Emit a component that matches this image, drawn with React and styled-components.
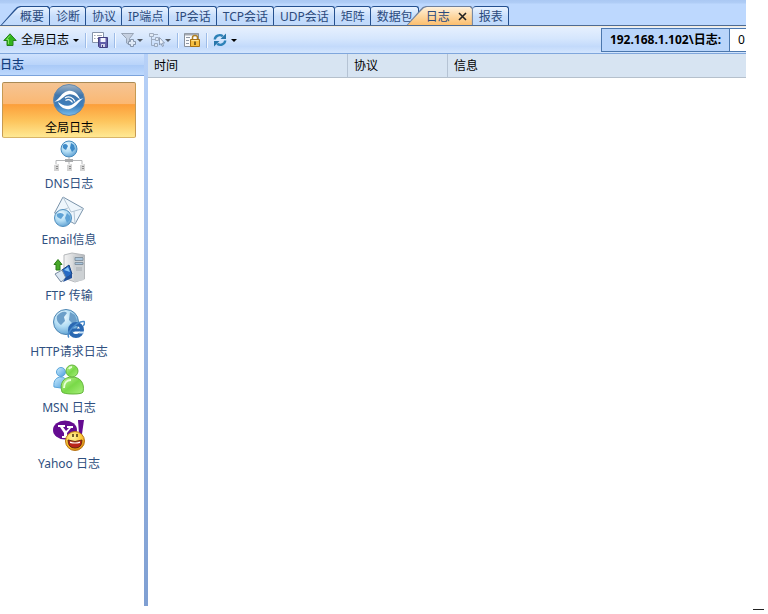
import { useState } from "react";
import styled, { createGlobalStyle, css } from "styled-components";

const GlobalStyle = createGlobalStyle`
  * {
    box-sizing: border-box;
  }
  body {
    margin: 0;
    background-color: #fff;
    font-family: "Noto Sans", "Noto Sans CJK SC", sans-serif;
    font-size: 12px;
    line-height: 18px;
    color: #000;
  }
  button {
    margin: 0;
    padding: 0;
    border: none;
    background: none;
    font: inherit;
    color: inherit;
    cursor: pointer;
  }
`;

const Page = styled.div`
  display: flex;
  align-items: stretch;
  min-height: 100vh;
`;

const Wrapper = styled.div`
  flex: 1;
  min-width: 0;
  display: flex;
  flex-direction: column;
  margin-bottom: 8px;
`;

const Gutter = styled.aside`
  width: 22px;
  display: flex;
  flex-direction: column;
  justify-content: flex-end;
  padding: 4px;
`;

const Dash = styled.div`
  width: 11px;
  height: 1px;
  margin-left: 3px;
  background-color: #222;
`;

const TabStrip = styled.div`
  display: flex;
  height: 26px;
  padding-top: 6px;
  overflow: hidden;
  border-bottom: 1px solid #4d6b94;
  background: linear-gradient(#aac8f3 0, #b0cdf6 3px, #bdd8fe 4px);
`;

const slanted = css`
  border-color: transparent;
  padding-left: 20px;
  isolation: isolate;
  background: none;

  &::before,
  &::after {
    content: "";
    position: absolute;
    z-index: -1;
    clip-path: polygon(
      0 100%, 14px 4px, 17px 1px, 20px 0,
      calc(100% - 2px) 0, 100% 2px, 100% 100%
    );
  }
  &::before {
    inset: -1px -1px 0 0;
    background-color: ${(props) => (props.$active ? "#6d7f9c" : "#24508f")};
  }
  &::after {
    inset: 0 0 0 1px;
    background: ${(props) =>
      props.$active
        ? "linear-gradient(#fff1dc, #fdd9a6 45%, #fdbc68)"
        : "linear-gradient(#eaf3ff, #c6ddfb 50%, #bfd9fc)"};
  }
`;

const TabItem = styled.div`
  position: relative;
  flex: none;
  display: flex;
  align-items: center;
  height: 20px;
  padding: 0 5px 0 6px;
  border: 1px solid #24508f;
  border-width: 1px 1px 0 0;
  border-radius: 3px 3px 0 0;
  color: #2b4a7c;
  background: linear-gradient(#eaf3ff, #c6ddfb 50%, #bfd9fc);
  ${(props) => props.$slanted && slanted}
  ${(props) =>
    props.$active &&
    css`
      margin-left: -13px;
    `}
`;

const CloseButton = styled.button`
  display: flex;
  margin-left: 8px;
`;

const Toolbar = styled.div`
  display: flex;
  align-items: center;
  height: 28px;
  padding-left: 3px;
  border-top: 1px solid #f4ead8;
  border-bottom: 1px solid #7fa6dc;
  background: linear-gradient(#e6f0fe, #d5e6fd 45%, #c3dafb 75%, #d3e5fe);
`;

const ToolGroup = styled.div`
  display: flex;
  align-items: center;
  gap: 6px;
`;

const ToolButton = styled.button`
  display: flex;
  align-items: center;
  gap: ${(props) => (props.disabled ? "0" : "4px")};
  opacity: ${(props) => (props.disabled ? 0.6 : 1)};
`;

const Caret = styled.span`
  border: 3px solid transparent;
  border-top-color: #000;
  border-bottom: none;
`;

const Divider = styled.span`
  width: 2px;
  height: 15px;
  margin: 0 5px 0 6px;
  border-left: 1px solid #9dbce8;
  border-right: 1px solid #f3f8ff;
`;

const Status = styled.div`
  display: flex;
  align-self: stretch;
  margin: 1px 0 1px auto;
  border: 1px solid #4b77ad;
  border-right: none;
  line-height: 22px;
  background-color: #b9d5fb;
`;

const StatusPath = styled.strong`
  padding: 0 8px;
`;

const StatusCount = styled.output`
  width: 17px;
  padding-left: 8px;
  overflow: hidden;
  border-left: 1px solid #4b77ad;
  background-color: #fff;
`;

const Body = styled.div`
  flex: 1;
  display: flex;
`;

const Sidebar = styled.nav`
  width: 148px;
  border-right: 4px solid;
  border-image: linear-gradient(#b7d1f8, #7f9fd2) 1;
`;

const SidebarTitle = styled.h2`
  margin: 0;
  height: 22px;
  font-size: 12px;
  line-height: 22px;
  font-weight: 500;
  color: #15407f;
  border-bottom: 1px solid #7ba3dc;
  background: linear-gradient(#cfe2fd, #b9d4fa 50%, #a9c9f7 52%, #bdd8fd);
`;

const LogList = styled.div`
  display: flex;
  flex-direction: column;
  padding: 6px 8px 6px 2px;
`;

const LogButton = styled.button`
  display: flex;
  flex-direction: column;
  align-items: center;
  gap: 3px;
  height: 56px;
  padding-top: 1px;
  border: 1px solid transparent;
  border-radius: 2px;
  color: #2f5080;
  ${(props) =>
    props.$active &&
    css`
      color: #000;
      border-color: #a98a55 #c69a52 #d9b568;
      background: linear-gradient(#f5c493, #fbb873 38%, #fc9f3b 40%, #fdc45c 70%, #ffe993);
    `}
`;

const Content = styled.main`
  flex: 1;
  min-width: 0;
`;

const LogTable = styled.table`
  width: 100%;
  table-layout: fixed;
  border-collapse: separate;
  border-spacing: 0;
`;

const HeaderCell = styled.th`
  width: ${(props) => props.$width || "auto"};
  height: 24px;
  padding: 0 6px;
  font-weight: 400;
  text-align: left;
  border-bottom: 1px solid #b5c0cc;
  background-color: #d7e4f2;
  &:not(:last-child) {
    border-right: 1px solid #b5c3d4;
  }
`;

const Icon = ({ size = 16, children }) => (
  <svg width={size} height={size} viewBox={`0 0 ${size} ${size}`} fill="none" aria-hidden="true">
    {children}
  </svg>
);

const GradientDefs = styled.svg`
  position: absolute;
  width: 0;
  height: 0;
`;

const Gradients = () => (
  <GradientDefs aria-hidden="true">
    <defs>
      <radialGradient id="globe" cx="0.38" cy="0.3" r="0.75">
        <stop offset="0" stopColor="#f2fbff" />
        <stop offset="0.5" stopColor="#b3ddf4" />
        <stop offset="1" stopColor="#5c9fd2" />
      </radialGradient>
      <linearGradient id="ball" x1="0" y1="0" x2="0" y2="1">
        <stop offset="0" stopColor="#a3b5c6" />
        <stop offset="0.35" stopColor="#3f76ad" />
        <stop offset="0.7" stopColor="#3f80bd" />
        <stop offset="1" stopColor="#79bdec" />
      </linearGradient>
      <linearGradient id="green" x1="0" y1="0" x2="1" y2="1">
        <stop offset="0" stopColor="#c6f59d" />
        <stop offset="0.5" stopColor="#79d948" />
        <stop offset="1" stopColor="#a9f07c" />
      </linearGradient>
      <linearGradient id="blue" x1="0" y1="0" x2="1" y2="1">
        <stop offset="0" stopColor="#cdeeff" />
        <stop offset="1" stopColor="#4a9ddd" />
      </linearGradient>
      <linearGradient id="metal" x1="0" y1="0" x2="1" y2="0">
        <stop offset="0" stopColor="#f4f4f4" />
        <stop offset="1" stopColor="#b4b8bc" />
      </linearGradient>
      <radialGradient id="smile" cx="0.4" cy="0.3" r="0.7">
        <stop offset="0" stopColor="#fff6a0" />
        <stop offset="0.7" stopColor="#fbc22c" />
        <stop offset="1" stopColor="#d88712" />
      </radialGradient>
    </defs>
  </GradientDefs>
);

const UpIcon = () => (
  <Icon size={14}>
    <path d="M7 0.8 13.2 7.5H10V12.5H4V7.5H0.8Z" fill="#31b51c" stroke="#26801a" />
    <path d="M7 2.5 3.5 6.5H5.5V11" stroke="#86df64" />
  </Icon>
);

const SaveIcon = () => (
  <Icon>
    <path d="M0.5 0.5H11.5V10.5H0.5Z" fill="#fff" stroke="#8795aa" />
    <path d="M2 3.5H3.5M5 3.5H10M2 6.5H3.5M5 6.5H8" stroke="#a1a9b6" />
    <path d="M6.5 5.5H15.5V15.5H7.5L6.5 14.5Z" fill="#625faa" stroke="#434080" />
    <path d="M8.5 6H13.5V10H8.5Z" fill="#f3f4ff" />
    <path d="M9 12H13V15H9Z" fill="#d1d1e8" />
    <path d="M10 13H11V15H10Z" fill="#434080" />
  </Icon>
);

const FilterIcon = () => (
  <Icon>
    <path d="M0.5 1.5H12.5L8.5 6.5V13L5.5 11V6.5Z" fill="#b9c1ce" stroke="#6d7888" />
    <path d="M9.5 7.5H12.5V9.5H14.5V12.5H12.5V14.5H9.5V12.5H7.5V9.5H9.5Z" fill="#eef1f5" stroke="#596577" />
  </Icon>
);

const TreeIcon = () => (
  <Icon>
    <path d="M0.5 1.5H4.5V4.5H0.5ZM6.5 5.5H9.5V8.5H6.5ZM5.5 11.5H8.5V14.5H5.5Z" fill="#e7ebf1" stroke="#7b8798" />
    <path d="M2.5 5V13.5H5M2.5 7.5H6M5 2.5H9" stroke="#7b8798" />
    <path d="M10.5 5.5V13L12 11.5L13.5 14.5L14.5 14L13.5 11H15.5Z" fill="#fff" stroke="#677386" />
  </Icon>
);

const LockIcon = () => (
  <Icon>
    <path d="M0.5 1.5H14.5V14.5H0.5Z" fill="#f9fafc" stroke="#88909b" />
    <path d="M1 2.5H14" stroke="#a3a9b2" strokeWidth="2" />
    <path d="M2 5.5H6M2 8.5H5M2 11.5H5" stroke="#8f98a6" />
    <path d="M8.5 8V5.5Q8.5 3.5 11 3.5T13.5 5.5V8" stroke="#b08021" strokeWidth="1.5" />
    <path d="M6.5 7.5H15.5V14.5H6.5Z" fill="#f6bf41" stroke="#a87112" />
    <path d="M7.5 8.5H14.5" stroke="#fde08b" />
    <path d="M10.3 9.5H11.7V13H10.3Z" fill="#513b10" />
  </Icon>
);

const RefreshIcon = () => (
  <Icon size={14}>
    <path d="M1.8 6.5C2 3 6.5 0.8 9.8 3.2" stroke="#2d82b8" strokeWidth="2.4" />
    <path d="M13 0.5V6H7.5Z" fill="#2876aa" />
    <path d="M12.2 7.5C12 11 7.5 13.2 4.2 10.8" stroke="#2d82b8" strokeWidth="2.4" />
    <path d="M1 13.5V8H6.5Z" fill="#2876aa" />
  </Icon>
);

const GlobalLogIcon = () => (
  <Icon size={32}>
    <circle cx="16" cy="16" r="15.5" fill="url(#ball)" stroke="#6488ab" />
    <path d="M1.5 17.5C7 15 8 8.5 15 7C21 6 25 10 27 15.5C23 12 20 9.5 15.5 10.5C10 11.5 8 18 1.5 17.5Z" fill="#fff" />
    <path d="M30.5 14.5C25 17 24 23 17 25C11 26 6.5 22.5 5 18C9 21 12 22.5 16.5 21.5C22 20.5 24 14.5 30.5 14.5Z" fill="#fff" />
    <path d="M12 14C16 11.5 20 13.5 22 17.5M12.5 16.5C15.5 14.5 18 16 19.5 18.5" stroke="#fff" strokeWidth="1.2" />
  </Icon>
);

const DnsIcon = () => (
  <Icon size={32}>
    <circle cx="16" cy="9" r="8" fill="url(#globe)" stroke="#478bbd" />
    <path d="M10 5C12 3 14 4 15 6L13 10C11 9 9 8 10 5ZM18 3L21 5L22 9L19 12L17 8Z" fill="#3d8ac8" />
    <path d="M16 17V21M3 24V20.5H29V24M16 21V24" stroke="#b4b6b8" />
    <path d="M12 19H20V22H12Z" fill="#a9abad" />
    <path d="M1 25 6 24V31H1ZM14 25 19 24V31H14ZM27 25 32 24V31H27Z" fill="#d4d4d4" />
    <path d="M3 26.5H5M3 28.5H5M16 26.5H18M16 28.5H18M29 26.5H31M29 28.5H31" stroke="#8d8d8d" />
  </Icon>
);

const EmailIcon = () => (
  <Icon size={32}>
    <path d="M10 1 30.5 12.5 22 28 1.5 17Z" fill="#eef6fc" stroke="#7a93aa" />
    <path d="M10 1 18 16 30.5 12.5M1.5 17 15 12M22 28 21 15" stroke="#b4c6d5" />
    <circle cx="10" cy="22" r="8.5" fill="url(#globe)" stroke="#5290bf" />
    <path d="M4 18C7 16 10 17 11 19L8 23C5 22 3 20 4 18ZM14 17 17 20 17 24 14 27 12 22Z" fill="#5fa3d6" />
  </Icon>
);

const FtpIcon = () => (
  <Icon size={32}>
    <path d="M11 3 19 1 31.5 3V27L22 30 11 26Z" fill="url(#metal)" stroke="#b5b8bb" />
    <path d="M20 4 31 5V28L21 30Z" fill="#cdd1d4" />
    <path d="M22 5.5H30V8.5H22ZM22 10.5H30V12.5H22Z" fill="#a9c6de" stroke="#8594a1" />
    <path d="M23 16H29M23 18H29" stroke="#a6acb1" />
    <path d="M5 7.5 9 12.5H7V18H3V12.5H1Z" fill="#49a829" stroke="#2d7c1a" />
    <path d="M9 18 16 13 19 22 12 27Z" fill="#2769c4" stroke="#174280" />
    <path d="M2 22 9 18 13 26 8 30Z" fill="#dbe6f2" stroke="#788ba1" />
    <path d="M12 26 19 22 19 26 10 30Z" fill="#23519c" />
    <path d="M11 18 15 15 17 20Z" fill="#8cc6f6" />
  </Icon>
);

const HttpIcon = () => (
  <Icon size={32}>
    <circle cx="13" cy="14" r="12.5" fill="url(#globe)" stroke="#4d86b3" />
    <path d="M4 8C8 3 12 3 14 5L11 9 12 13 8 17C5 15 3 12 4 8ZM17 4 22 7 24 13 20 16 16 12Z" fill="#6c9fc9" />
    <circle cx="23" cy="22" r="6" stroke="#2a68b2" strokeWidth="4" />
    <path d="M18 22H29" stroke="#2a68b2" strokeWidth="3" />
    <path d="M26 24.5H31" stroke="#cde4f7" strokeWidth="2" />
    <path d="M16 29.5C12 26 24 12.5 31 13.5C32 15 31 17 30 18" stroke="#4a8ccc" strokeWidth="1.5" />
  </Icon>
);

const MsnIcon = () => (
  <Icon size={32}>
    <circle cx="8" cy="8" r="4.5" fill="url(#blue)" stroke="#5aa5da" />
    <path d="M1 23C0 16 4 13 8 13S14 16 14 23Q8 25 1 23Z" fill="url(#blue)" stroke="#5aa5da" />
    <path d="M9 28C6 19 11 13 19 13S32 19 30 28Q29 30 20 30T9 28Z" fill="url(#green)" stroke="#64b63b" />
    <circle cx="19" cy="7" r="6" fill="url(#green)" stroke="#64b63b" />
    <path d="M11 24C11 19 14 16 18 16M16 5Q17 3 19 3" stroke="#e6ffd6" strokeWidth="2" />
  </Icon>
);

const YahooIcon = () => (
  <Icon size={32}>
    <ellipse cx="12" cy="10" rx="12" ry="9.5" fill="#650b91" />
    <path d="M25 0H31L29 14H26Z" fill="#650b91" />
    <path d="M5 5H12V7H10L13 11 16 8H14V6H20V8H18L14 13V16H16V18H9V16H11V13L7 7H5Z" fill="#fff" />
    <circle cx="22" cy="21" r="9.5" fill="url(#smile)" stroke="#b87517" />
    <path d="M15 20Q22 23 29 20Q29 28 22 28T15 20Z" fill="#b9231a" stroke="#682512" />
    <path d="M17 21.5Q22 23.5 27 21.5V23Q22 24 17 23Z" fill="#fff" />
    <path d="M20 14V17M24 14V17" stroke="#4c320b" strokeWidth="1.5" />
  </Icon>
);

const tabs = ["概要", "诊断", "协议", "IP端点", "IP会话", "TCP会话", "UDP会话", "矩阵", "数据包", "日志", "报表"];

const logs = [
  { name: "全局日志", Picture: GlobalLogIcon },
  { name: "DNS日志", Picture: DnsIcon },
  { name: "Email信息", Picture: EmailIcon },
  { name: "FTP 传输", Picture: FtpIcon },
  { name: "HTTP请求日志", Picture: HttpIcon },
  { name: "MSN 日志", Picture: MsnIcon },
  { name: "Yahoo 日志", Picture: YahooIcon },
];

export default function App() {
  const [tab, setTab] = useState("日志");
  const [log, setLog] = useState("全局日志");

  return (
    <Page>
      <GlobalStyle />
      <Gradients />
      <Wrapper>
        <TabStrip>
          {tabs.map((name, index) => (
            <TabItem key={name} $active={name === tab} $slanted={index === 0 || name === tab}>
              <button onClick={() => setTab(name)}>{name}</button>
              {name === tab && (
                <CloseButton aria-label="关闭">
                  <svg width="9" height="9" viewBox="0 0 9 9" aria-hidden="true">
                    <path d="M1 1 8 8M8 1 1 8" stroke="#222" strokeWidth="1.6" />
                  </svg>
                </CloseButton>
              )}
            </TabItem>
          ))}
        </TabStrip>
        <Toolbar>
          <ToolButton>
            <UpIcon />
            全局日志
            <Caret />
          </ToolButton>
          <Divider />
          <ToolButton aria-label="保存">
            <SaveIcon />
          </ToolButton>
          <Divider />
          <ToolGroup>
            <ToolButton disabled aria-label="过滤">
              <FilterIcon />
              <Caret />
            </ToolButton>
            <ToolButton disabled aria-label="定位">
              <TreeIcon />
              <Caret />
            </ToolButton>
          </ToolGroup>
          <Divider />
          <ToolButton aria-label="锁定">
            <LockIcon />
          </ToolButton>
          <Divider />
          <ToolButton aria-label="刷新">
            <RefreshIcon />
            <Caret />
          </ToolButton>
          <Status>
            <StatusPath>192.168.1.102\日志:</StatusPath>
            <StatusCount>0</StatusCount>
          </Status>
        </Toolbar>
        <Body>
          <Sidebar>
            <SidebarTitle>日志</SidebarTitle>
            <LogList>
              {logs.map(({ name, Picture }) => (
                <LogButton key={name} $active={name === log} onClick={() => setLog(name)}>
                  <Picture />
                  {name}
                </LogButton>
              ))}
            </LogList>
          </Sidebar>
          <Content>
            <LogTable>
              <thead>
                <tr>
                  <HeaderCell $width="200px">时间</HeaderCell>
                  <HeaderCell $width="100px">协议</HeaderCell>
                  <HeaderCell>信息</HeaderCell>
                </tr>
              </thead>
            </LogTable>
          </Content>
        </Body>
      </Wrapper>
      <Gutter>
        <Dash />
      </Gutter>
    </Page>
  );
}
